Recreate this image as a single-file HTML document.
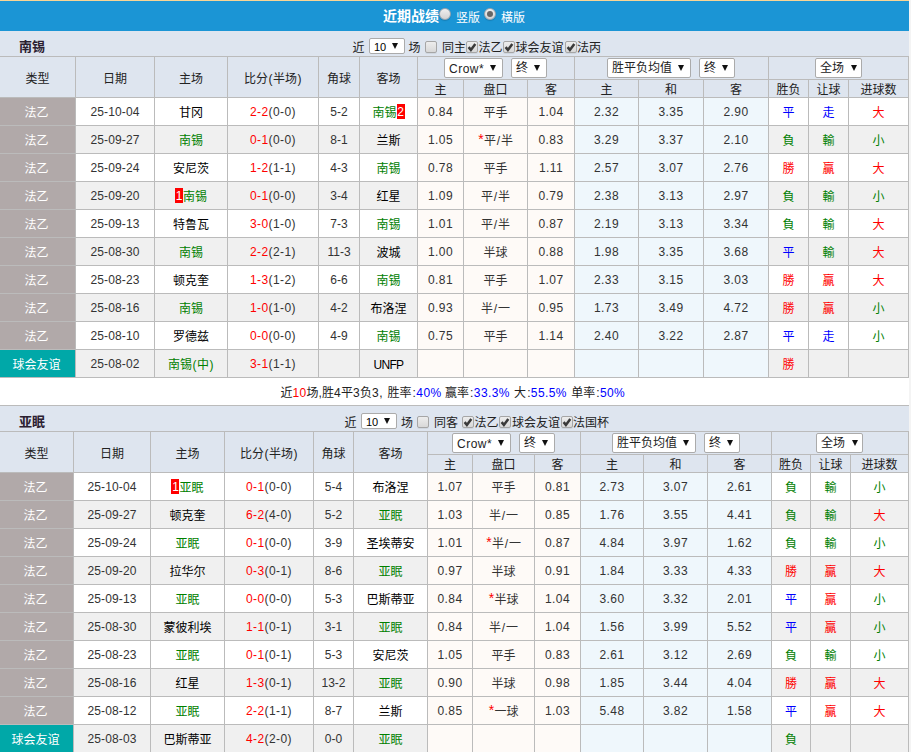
<!DOCTYPE html>
<html lang="zh-CN"><head><meta charset="utf-8"><title>近期战绩</title>
<style>
html,body{margin:0;padding:0;background:#fff;}
body{width:911px;height:752px;overflow:hidden;font-family:"Liberation Sans","Noto Sans CJK SC",sans-serif;font-size:12px;color:#333;}
#w{position:relative;width:911px;height:752px;overflow:hidden;background:#f4f4f4;}
.top{height:30px;border-top:1px solid #f9d595;background:#1b95d5;color:#fff;width:909px;position:relative;}
.top span{position:absolute;}
.ttl{left:383px;top:6px;font-size:14px;font-weight:bold;line-height:18px;}
.rl{top:9px;font-size:12px;line-height:16px;}
.rd{top:7px;width:12px;height:12px;border-radius:50%;box-sizing:border-box;border:1px solid #9aa4ad;background:linear-gradient(#efefef,#d2d2d2);box-shadow:0 1px 1px rgba(0,0,0,.15);}
.rd.on i{position:absolute;left:2px;top:2px;width:6px;height:6px;border-radius:50%;background:#666;}
.sec{position:relative;width:909px;height:25px;background:#dee5ef;border-bottom:1px solid #bbb;}
.sec>*{position:absolute;}
.tn{left:19px;top:8px;font-size:13px;font-weight:bold;line-height:16px;color:#2b2030;}
.lb{top:9px;line-height:16px;font-size:12px;color:#222;white-space:nowrap;}
.sel{display:inline-block;box-sizing:border-box;height:20px;border:1px solid #ababab;border-radius:2px;background:#fff;position:relative;vertical-align:top;text-align:left;}
.sel .st{position:absolute;left:4px;top:0;line-height:18px;font-size:12px;color:#222;white-space:nowrap;}
.sel .st.la{font-size:12px;letter-spacing:0.5px;top:1px;}
.sel i{position:absolute;right:6px;top:6px;width:0;height:0;border-left:3.5px solid transparent;border-right:3.5px solid transparent;border-top:6px solid #111;}
.sec .s10{position:absolute;height:16px;top:7px;}
.s10 .st{font-size:11px;line-height:14px;left:4px;top:1px;color:#000;}
.s10 i{top:4px;right:6px;}
.cb{display:inline-block;box-sizing:border-box;width:12px;height:12px;border:1px solid #a6a6a6;border-radius:2px;background:linear-gradient(#ededed,#d8d8d8);top:10px;box-shadow:0 1px 0 rgba(0,0,0,.06);}
.cb svg{position:absolute;left:-1px;top:-1px;}
table.t{border-collapse:separate;border-spacing:0;table-layout:fixed;}
.t th,.t td{box-sizing:border-box;border-right:1px solid #bbb;border-bottom:1px solid #bbb;padding:0;text-align:center;font-weight:normal;font-size:12px;white-space:nowrap;overflow:hidden;}
.t th{background:#dee5ef;color:#222;}
.h1 th{height:23px;}
.t th.hs{text-align:left;font-size:0;line-height:0;vertical-align:top;padding-top:1px;}
.h2 th{height:18px;line-height:14px;padding-top:3px;}
.t td{height:28px;line-height:23px;padding-top:4px;color:#333;vertical-align:top;}
.r0 td{background:#fff;}
.r1 td{background:#f0f0f0;}
.t td.ty{background:#b1a9a9;color:#fff;padding-right:2px;}
.t td.ty.fr{background:#00a8a8;}
.t td.oa{background:#fefaf7;}
.t td.n{letter-spacing:.4px;padding-top:3px;}
.t td.nc{padding-top:3px;}
.t td.nd{letter-spacing:.14px;padding-top:3px;}
.t td.ns{letter-spacing:.4px;padding-top:3px;}
.t td.ob{background:#eff7fc;}
.tg{color:#008000;}
.tk{color:#000;}
.cr{color:#f00;}
.cb2{color:#00f;}
.rc{background:#f00;color:#fff;font-weight:normal;font-size:12px;line-height:17px;overflow:hidden;height:15px;width:8px;display:inline-block;vertical-align:top;margin-top:2px;text-align:center;}
.sum{width:909px;height:28px;line-height:28px;padding-top:1px;overflow:hidden;background:#fff;text-align:left;white-space:nowrap;border-bottom:1px solid #bbb;font-size:12px;color:#222;box-sizing:border-box;}
.sa{margin-right:8px;}
.h1 .sel{margin-top:0;}
.xr{color:#f00;}
.xg{color:#008000;}
.xb{color:#00f;}
.sw{display:inline-block;margin-left:280.5px;}
.l{display:inline-block;letter-spacing:.4px;text-align:left;white-space:nowrap;overflow:visible;vertical-align:top;}
.pp{display:inline-block;width:5px;text-align:center;}
.un{letter-spacing:-.7px;}
.as{display:inline-block;width:6px;text-align:center;color:#f00;font-size:14px;line-height:12px;vertical-align:1px;}
.sl{display:inline-block;width:5px;text-align:center;}
.sel.sc i{right:4px;}

</style></head>
<body>
<div id="w">
<div class="top"><span class="ttl">近期战绩</span><span class="rd" style="left:439px"></span><span class="rl" style="left:456px">竖版</span><span class="rd on" style="left:484px"><i></i></span><span class="rl" style="left:501px">橫版</span></div>
<div class="sec"><span class="tn">南锡</span>
<span class="lb" style="left:352.5px">近</span>
<span class="sel s10" style="left:369px;width:36px"><span class="st">10</span><i></i></span>
<span class="lb" style="left:408.5px">场</span>
<span class="cb" style="left:425px"></span>
<span class="lb" style="left:442px">同主</span>
<span class="cb on" style="left:466px"><svg viewBox="0 0 12 12" width="12" height="12"><path d="M2.6 6.1 L4.9 8.9 L9.3 2.9" fill="none" stroke="#3a3a3a" stroke-width="2.5" stroke-linejoin="miter"/></svg></span>
<span class="lb" style="left:478.5px">法乙</span>
<span class="cb on" style="left:503px"><svg viewBox="0 0 12 12" width="12" height="12"><path d="M2.6 6.1 L4.9 8.9 L9.3 2.9" fill="none" stroke="#3a3a3a" stroke-width="2.5" stroke-linejoin="miter"/></svg></span>
<span class="lb" style="left:515.5px">球会友谊</span>
<span class="cb on" style="left:565px"><svg viewBox="0 0 12 12" width="12" height="12"><path d="M2.6 6.1 L4.9 8.9 L9.3 2.9" fill="none" stroke="#3a3a3a" stroke-width="2.5" stroke-linejoin="miter"/></svg></span>
<span class="lb" style="left:577px">法丙</span>
</div>
<table class="t" style="width:909px"><colgroup>
<col style="width:76px">
<col style="width:79px">
<col style="width:73px">
<col style="width:91px">
<col style="width:41px">
<col style="width:58px">
<col style="width:46px">
<col style="width:64px">
<col style="width:47px">
<col style="width:64px">
<col style="width:65px">
<col style="width:65px">
<col style="width:40px">
<col style="width:40px">
<col style="width:60px">
</colgroup>
<tr class="h1"><th rowspan="2">类型</th><th rowspan="2">日期</th><th rowspan="2">主场</th><th rowspan="2">比分<span class="pp">(</span>半场<span class="pp">)</span></th><th rowspan="2">角球</th><th rowspan="2">客场</th>
<th colspan="3" class="hs" style="padding-left:26px"><span class="sel sa" style="width:59px"><span class="st la">Crow*</span><i></i></span><span class="sel sb" style="width:36px"><span class="st">终</span><i></i></span></th>
<th colspan="3" class="hs" style="padding-left:32px"><span class="sel sa" style="width:84px"><span class="st">胜平负均值</span><i></i></span><span class="sel sb" style="width:36px"><span class="st">终</span><i></i></span></th>
<th colspan="3" class="hs" style="padding-left:46px"><span class="sel sc" style="width:47px"><span class="st">全场</span><i></i></span></th></tr>
<tr class="h2"><th>主</th><th>盘口</th><th>客</th><th>主</th><th>和</th><th>客</th><th>胜负</th><th>让球</th><th>进球数</th></tr>
<tr class="r0"><td class="ty">法乙</td><td class="nd">25-10-04</td><td><span class="tk">甘冈</span></td><td class="ns"><span class="cr">2-2</span>(0-0)</td><td class="nc">5-2</td><td><span class="tg">南锡</span><span class="rc">2</span></td>
<td class="oa n">0.84</td><td class="oa">平手</td><td class="oa n">1.04</td><td class="ob n">2.32</td><td class="ob n">3.35</td><td class="ob n">2.90</td>
<td><span class="xb">平</span></td><td><span class="xb">走</span></td><td><span class="xr">大</span></td></tr>
<tr class="r1"><td class="ty">法乙</td><td class="nd">25-09-27</td><td><span class="tg">南锡</span></td><td class="ns"><span class="cr">0-1</span>(0-0)</td><td class="nc">8-1</td><td><span class="tk">兰斯</span></td>
<td class="oa n">1.05</td><td class="oa"><span class="as">*</span>平<span class="sl">/</span>半</td><td class="oa n">0.83</td><td class="ob n">3.29</td><td class="ob n">3.37</td><td class="ob n">2.10</td>
<td><span class="xg">負</span></td><td><span class="xg">輸</span></td><td><span class="xg">小</span></td></tr>
<tr class="r0"><td class="ty">法乙</td><td class="nd">25-09-24</td><td><span class="tk">安尼茨</span></td><td class="ns"><span class="cr">1-2</span>(1-1)</td><td class="nc">4-3</td><td><span class="tg">南锡</span></td>
<td class="oa n">0.78</td><td class="oa">平手</td><td class="oa n">1.11</td><td class="ob n">2.57</td><td class="ob n">3.07</td><td class="ob n">2.76</td>
<td><span class="xr">勝</span></td><td><span class="xr">贏</span></td><td><span class="xr">大</span></td></tr>
<tr class="r1"><td class="ty">法乙</td><td class="nd">25-09-20</td><td><span class="rc">1</span><span class="tg">南锡</span></td><td class="ns"><span class="cr">0-1</span>(0-0)</td><td class="nc">3-4</td><td><span class="tk">红星</span></td>
<td class="oa n">1.09</td><td class="oa">平<span class="sl">/</span>半</td><td class="oa n">0.79</td><td class="ob n">2.38</td><td class="ob n">3.13</td><td class="ob n">2.97</td>
<td><span class="xg">負</span></td><td><span class="xg">輸</span></td><td><span class="xg">小</span></td></tr>
<tr class="r0"><td class="ty">法乙</td><td class="nd">25-09-13</td><td><span class="tk">特鲁瓦</span></td><td class="ns"><span class="cr">3-0</span>(1-0)</td><td class="nc">7-3</td><td><span class="tg">南锡</span></td>
<td class="oa n">1.01</td><td class="oa">平<span class="sl">/</span>半</td><td class="oa n">0.87</td><td class="ob n">2.19</td><td class="ob n">3.13</td><td class="ob n">3.34</td>
<td><span class="xg">負</span></td><td><span class="xg">輸</span></td><td><span class="xr">大</span></td></tr>
<tr class="r1"><td class="ty">法乙</td><td class="nd">25-08-30</td><td><span class="tg">南锡</span></td><td class="ns"><span class="cr">2-2</span>(2-1)</td><td class="nc">11-3</td><td><span class="tk">波城</span></td>
<td class="oa n">1.00</td><td class="oa">半球</td><td class="oa n">0.88</td><td class="ob n">1.98</td><td class="ob n">3.35</td><td class="ob n">3.68</td>
<td><span class="xb">平</span></td><td><span class="xg">輸</span></td><td><span class="xr">大</span></td></tr>
<tr class="r0"><td class="ty">法乙</td><td class="nd">25-08-23</td><td><span class="tk">顿克奎</span></td><td class="ns"><span class="cr">1-3</span>(1-2)</td><td class="nc">6-6</td><td><span class="tg">南锡</span></td>
<td class="oa n">0.81</td><td class="oa">平手</td><td class="oa n">1.07</td><td class="ob n">2.33</td><td class="ob n">3.15</td><td class="ob n">3.03</td>
<td><span class="xr">勝</span></td><td><span class="xr">贏</span></td><td><span class="xr">大</span></td></tr>
<tr class="r1"><td class="ty">法乙</td><td class="nd">25-08-16</td><td><span class="tg">南锡</span></td><td class="ns"><span class="cr">1-0</span>(1-0)</td><td class="nc">4-2</td><td><span class="tk">布洛涅</span></td>
<td class="oa n">0.93</td><td class="oa">半<span class="sl">/</span>一</td><td class="oa n">0.95</td><td class="ob n">1.73</td><td class="ob n">3.49</td><td class="ob n">4.72</td>
<td><span class="xr">勝</span></td><td><span class="xr">贏</span></td><td><span class="xg">小</span></td></tr>
<tr class="r0"><td class="ty">法乙</td><td class="nd">25-08-10</td><td><span class="tk">罗德兹</span></td><td class="ns"><span class="cr">0-0</span>(0-0)</td><td class="nc">4-9</td><td><span class="tg">南锡</span></td>
<td class="oa n">0.75</td><td class="oa">平手</td><td class="oa n">1.14</td><td class="ob n">2.40</td><td class="ob n">3.22</td><td class="ob n">2.87</td>
<td><span class="xb">平</span></td><td><span class="xb">走</span></td><td><span class="xg">小</span></td></tr>
<tr class="r1"><td class="ty fr">球会友谊</td><td class="nd">25-08-02</td><td><span class="tg">南锡<span class="pp">(</span>中<span class="pp">)</span></span></td><td class="ns"><span class="cr">3-1</span>(1-1)</td><td class="nc"></td><td><span class="tk"><span class="un">UNFP</span></span></td>
<td class="oa n"></td><td class="oa"></td><td class="oa n"></td><td class="ob n"></td><td class="ob n"></td><td class="ob n"></td>
<td><span class="xr">勝</span></td><td></td><td></td></tr>
</table>
<div class="sum"><span class="sw">近<span class="l cr" style="width:14px;">10</span>场<span class="l " style="width:3.5px;">,</span>胜<span class="l " style="width:7px;">4</span>平<span class="l " style="width:7px;">3</span>负<span class="l " style="width:15.5px;">3,</span>胜率<span class="l " style="width:32.5px;padding-left:1px">:<span class="cb2">40%</span></span>赢率<span class="l " style="width:44px;padding-left:1px">:<span class="cb2">33.3%</span></span>大<span class="l " style="width:44px;padding-left:1px">:<span class="cb2">55.5%</span></span>单率<span class="l " style="width:28.5px;padding-left:1px">:<span class="cb2">50%</span></span></span></div>
<div class="sec"><span class="tn">亚眠</span>
<span class="lb" style="left:344.5px">近</span>
<span class="sel s10" style="left:361px;width:36px"><span class="st">10</span><i></i></span>
<span class="lb" style="left:401px">场</span>
<span class="cb" style="left:417px"></span>
<span class="lb" style="left:434px">同客</span>
<span class="cb on" style="left:462px"><svg viewBox="0 0 12 12" width="12" height="12"><path d="M2.6 6.1 L4.9 8.9 L9.3 2.9" fill="none" stroke="#3a3a3a" stroke-width="2.5" stroke-linejoin="miter"/></svg></span>
<span class="lb" style="left:474.5px">法乙</span>
<span class="cb on" style="left:499px"><svg viewBox="0 0 12 12" width="12" height="12"><path d="M2.6 6.1 L4.9 8.9 L9.3 2.9" fill="none" stroke="#3a3a3a" stroke-width="2.5" stroke-linejoin="miter"/></svg></span>
<span class="lb" style="left:512px">球会友谊</span>
<span class="cb on" style="left:561px"><svg viewBox="0 0 12 12" width="12" height="12"><path d="M2.6 6.1 L4.9 8.9 L9.3 2.9" fill="none" stroke="#3a3a3a" stroke-width="2.5" stroke-linejoin="miter"/></svg></span>
<span class="lb" style="left:573px">法国杯</span>
</div>
<table class="t" style="width:909px"><colgroup>
<col style="width:74px">
<col style="width:77px">
<col style="width:74px">
<col style="width:89px">
<col style="width:40px">
<col style="width:74px">
<col style="width:45px">
<col style="width:62px">
<col style="width:46px">
<col style="width:63px">
<col style="width:64px">
<col style="width:64px">
<col style="width:39px">
<col style="width:40px">
<col style="width:58px">
</colgroup>
<tr class="h1"><th rowspan="2">类型</th><th rowspan="2">日期</th><th rowspan="2">主场</th><th rowspan="2">比分<span class="pp">(</span>半场<span class="pp">)</span></th><th rowspan="2">角球</th><th rowspan="2">客场</th>
<th colspan="3" class="hs" style="padding-left:24px"><span class="sel sa" style="width:59px"><span class="st la">Crow*</span><i></i></span><span class="sel sb" style="width:36px"><span class="st">终</span><i></i></span></th>
<th colspan="3" class="hs" style="padding-left:31px"><span class="sel sa" style="width:84px"><span class="st">胜平负均值</span><i></i></span><span class="sel sb" style="width:36px"><span class="st">终</span><i></i></span></th>
<th colspan="3" class="hs" style="padding-left:44px"><span class="sel sc" style="width:47px"><span class="st">全场</span><i></i></span></th></tr>
<tr class="h2"><th>主</th><th>盘口</th><th>客</th><th>主</th><th>和</th><th>客</th><th>胜负</th><th>让球</th><th>进球数</th></tr>
<tr class="r0"><td class="ty">法乙</td><td class="nd">25-10-04</td><td><span class="rc">1</span><span class="tg">亚眠</span></td><td class="ns"><span class="cr">0-1</span>(0-0)</td><td class="nc">5-4</td><td><span class="tk">布洛涅</span></td>
<td class="oa n">1.07</td><td class="oa">平手</td><td class="oa n">0.81</td><td class="ob n">2.73</td><td class="ob n">3.07</td><td class="ob n">2.61</td>
<td><span class="xg">負</span></td><td><span class="xg">輸</span></td><td><span class="xg">小</span></td></tr>
<tr class="r1"><td class="ty">法乙</td><td class="nd">25-09-27</td><td><span class="tk">顿克奎</span></td><td class="ns"><span class="cr">6-2</span>(4-0)</td><td class="nc">5-2</td><td><span class="tg">亚眠</span></td>
<td class="oa n">1.03</td><td class="oa">半<span class="sl">/</span>一</td><td class="oa n">0.85</td><td class="ob n">1.76</td><td class="ob n">3.55</td><td class="ob n">4.41</td>
<td><span class="xg">負</span></td><td><span class="xg">輸</span></td><td><span class="xr">大</span></td></tr>
<tr class="r0"><td class="ty">法乙</td><td class="nd">25-09-24</td><td><span class="tg">亚眠</span></td><td class="ns"><span class="cr">0-1</span>(0-0)</td><td class="nc">3-9</td><td><span class="tk">圣埃蒂安</span></td>
<td class="oa n">1.01</td><td class="oa"><span class="as">*</span>半<span class="sl">/</span>一</td><td class="oa n">0.87</td><td class="ob n">4.84</td><td class="ob n">3.97</td><td class="ob n">1.62</td>
<td><span class="xg">負</span></td><td><span class="xg">輸</span></td><td><span class="xg">小</span></td></tr>
<tr class="r1"><td class="ty">法乙</td><td class="nd">25-09-20</td><td><span class="tk">拉华尔</span></td><td class="ns"><span class="cr">0-3</span>(0-1)</td><td class="nc">8-6</td><td><span class="tg">亚眠</span></td>
<td class="oa n">0.97</td><td class="oa">半球</td><td class="oa n">0.91</td><td class="ob n">1.84</td><td class="ob n">3.33</td><td class="ob n">4.33</td>
<td><span class="xr">勝</span></td><td><span class="xr">贏</span></td><td><span class="xr">大</span></td></tr>
<tr class="r0"><td class="ty">法乙</td><td class="nd">25-09-13</td><td><span class="tg">亚眠</span></td><td class="ns"><span class="cr">0-0</span>(0-0)</td><td class="nc">5-3</td><td><span class="tk">巴斯蒂亚</span></td>
<td class="oa n">0.84</td><td class="oa"><span class="as">*</span>半球</td><td class="oa n">1.04</td><td class="ob n">3.60</td><td class="ob n">3.32</td><td class="ob n">2.01</td>
<td><span class="xb">平</span></td><td><span class="xr">贏</span></td><td><span class="xg">小</span></td></tr>
<tr class="r1"><td class="ty">法乙</td><td class="nd">25-08-30</td><td><span class="tk">蒙彼利埃</span></td><td class="ns"><span class="cr">1-1</span>(0-1)</td><td class="nc">3-1</td><td><span class="tg">亚眠</span></td>
<td class="oa n">0.84</td><td class="oa">半<span class="sl">/</span>一</td><td class="oa n">1.04</td><td class="ob n">1.56</td><td class="ob n">3.99</td><td class="ob n">5.52</td>
<td><span class="xb">平</span></td><td><span class="xr">贏</span></td><td><span class="xg">小</span></td></tr>
<tr class="r0"><td class="ty">法乙</td><td class="nd">25-08-23</td><td><span class="tg">亚眠</span></td><td class="ns"><span class="cr">0-1</span>(0-1)</td><td class="nc">5-3</td><td><span class="tk">安尼茨</span></td>
<td class="oa n">1.05</td><td class="oa">平手</td><td class="oa n">0.83</td><td class="ob n">2.61</td><td class="ob n">3.12</td><td class="ob n">2.69</td>
<td><span class="xg">負</span></td><td><span class="xg">輸</span></td><td><span class="xg">小</span></td></tr>
<tr class="r1"><td class="ty">法乙</td><td class="nd">25-08-16</td><td><span class="tk">红星</span></td><td class="ns"><span class="cr">1-3</span>(0-1)</td><td class="nc">13-2</td><td><span class="tg">亚眠</span></td>
<td class="oa n">0.90</td><td class="oa">半球</td><td class="oa n">0.98</td><td class="ob n">1.85</td><td class="ob n">3.44</td><td class="ob n">4.04</td>
<td><span class="xr">勝</span></td><td><span class="xr">贏</span></td><td><span class="xr">大</span></td></tr>
<tr class="r0"><td class="ty">法乙</td><td class="nd">25-08-12</td><td><span class="tg">亚眠</span></td><td class="ns"><span class="cr">2-2</span>(1-1)</td><td class="nc">8-7</td><td><span class="tk">兰斯</span></td>
<td class="oa n">0.85</td><td class="oa"><span class="as">*</span>一球</td><td class="oa n">1.03</td><td class="ob n">5.48</td><td class="ob n">3.82</td><td class="ob n">1.58</td>
<td><span class="xb">平</span></td><td><span class="xr">贏</span></td><td><span class="xr">大</span></td></tr>
<tr class="r1"><td class="ty fr">球会友谊</td><td class="nd">25-08-03</td><td><span class="tk">巴斯蒂亚</span></td><td class="ns"><span class="cr">4-2</span>(2-0)</td><td class="nc">0-0</td><td><span class="tg">亚眠</span></td>
<td class="oa n"></td><td class="oa"></td><td class="oa n"></td><td class="ob n"></td><td class="ob n"></td><td class="ob n"></td>
<td><span class="xg">負</span></td><td></td><td></td></tr>
</table>
</div>
</body></html>
